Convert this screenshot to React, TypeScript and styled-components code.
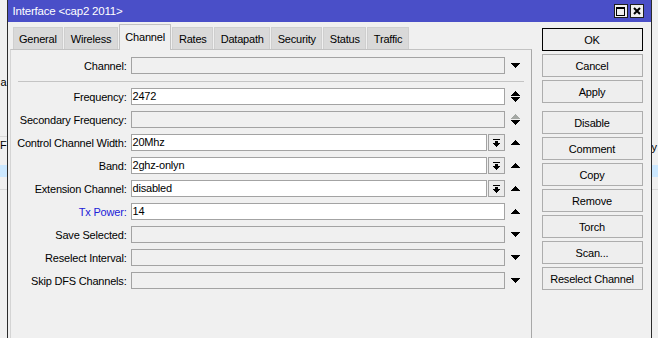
import React from "react";
import styled, { createGlobalStyle } from "styled-components";

type ArrowKind = "down" | "up" | "updown" | "updown-off";

interface FieldRow {
  label: string;
  value?: string;
  editable?: boolean;
  drop?: boolean;
  accent?: boolean;
  arrow: ArrowKind;
}

const rows: FieldRow[] = [
  { label: "Frequency", value: "2472", editable: true, arrow: "updown" },
  { label: "Secondary Frequency", arrow: "updown-off" },
  { label: "Control Channel Width", value: "20Mhz", editable: true, drop: true, arrow: "up" },
  { label: "Band", value: "2ghz-onlyn", editable: true, drop: true, arrow: "up" },
  { label: "Extension Channel", value: "disabled", editable: true, drop: true, arrow: "up" },
  { label: "Tx Power", value: "14", editable: true, accent: true, arrow: "up" },
  { label: "Save Selected", arrow: "down" },
  { label: "Reselect Interval", arrow: "down" },
  { label: "Skip DFS Channels", arrow: "down" },
];

const tabs = ["General", "Wireless", "Channel", "Rates", "Datapath", "Security", "Status", "Traffic"];

const buttons = [
  { text: "OK", primary: true },
  { text: "Cancel" },
  { text: "Apply" },
  { text: "Disable", groupStart: true },
  { text: "Comment" },
  { text: "Copy" },
  { text: "Remove" },
  { text: "Torch" },
  { text: "Scan..." },
  { text: "Reselect Channel" },
];

const GlobalStyle = createGlobalStyle`
  html, body { margin: 0; padding: 0; background: #f0f0f0; }
  body {
    font-family: "Liberation Sans", Arial, sans-serif;
    font-size: 11px;
    color: #000;
  }
  * { box-sizing: border-box; }
`;

const Desktop = styled.div`
  display: flex;
  width: 658px;
  height: 338px;
  overflow: hidden;
  background: #f0f0f0;
  letter-spacing: -0.2px;
`;

const Peek = styled.div<{ $align: "left" | "right" }>`
  flex: 1;
  min-width: 0;
  display: flex;
  flex-direction: column;
  overflow: hidden;
  white-space: nowrap;
  text-align: ${(p) => p.$align};
`;

const PeekRow = styled.div<{ $h: number; $selected?: boolean; $line?: boolean }>`
  flex: none;
  height: ${(p) => p.$h}px;
  line-height: ${(p) => p.$h}px;
  background: ${(p) => (p.$selected ? "#cce8ff" : "transparent")};
  border-bottom: ${(p) => (p.$line ? "1px solid #d9d9d9" : "none")};
`;

const Window = styled.div`
  flex: none;
  width: 645px;
  display: flex;
  flex-direction: column;
  background: #f0f0f0;
  border-left: 1px solid #2b2b2b;
  border-right: 1px solid #2b2b2b;
`;

const TitleBar = styled.div`
  flex: none;
  height: 22px;
  display: flex;
  align-items: center;
  padding: 0 7px 0 5px;
  background: #4a4fc8;
  color: #fff;
  font-size: 11.5px;
`;

const Title = styled.span`
  flex: 1;
`;

const TitleButton = styled.div`
  width: 14px;
  height: 14px;
  margin-left: 2px;
  display: flex;
  align-items: center;
  justify-content: center;
  background: #efefef;
  border: 1px solid #1e1e1e;
`;

const Body = styled.div`
  flex: 1;
  display: flex;
  gap: 10px;
  padding: 0 8px 0 2px;
`;

const Main = styled.div`
  width: 522px;
  display: flex;
  flex-direction: column;
  padding-top: 2px;
`;

const TabStrip = styled.div`
  flex: none;
  height: 25px;
  display: flex;
  align-items: flex-end;
  gap: 1px;
  padding-left: 3px;
`;

const Tab = styled.div<{ $active?: boolean }>`
  position: relative;
  z-index: ${(p) => (p.$active ? 1 : 0)};
  height: ${(p) => (p.$active ? 26 : 22)}px;
  margin-bottom: ${(p) => (p.$active ? -1 : 0)}px;
  padding: 0 5.5px ${(p) => (p.$active ? 2 : 0)}px;
  display: flex;
  align-items: center;
  background: ${(p) => (p.$active ? "#f0f0f0" : "#d9d9d9")};
  border: 1px solid ${(p) => (p.$active ? "#c2c2c2" : "#cfcfcf")};
  border-bottom: none;
`;

const Panel = styled.div`
  flex: 1;
  display: flex;
  flex-direction: column;
  gap: 6px;
  padding: 7px 7px 0 0;
  border-top: 1px solid #c2c2c2;
  border-left: 1px solid #d4d4d4;
  border-right: 1px solid #a8a8a8;
`;

const Separator = styled.div`
  flex: none;
  height: 1px;
  margin: 1px 0 0 7px;
  background: #c4c4c4;
`;

const Row = styled.div`
  flex: none;
  height: 17px;
  display: grid;
  grid-template-columns: 120px 374px 19px;
  align-items: center;
`;

const Label = styled.span<{ $accent?: boolean }>`
  padding-right: 4px;
  text-align: right;
  white-space: nowrap;
  color: ${(p) => (p.$accent ? "#2020d8" : "#000")};
`;

const FieldWrap = styled.div`
  display: flex;
  gap: 1px;
  height: 17px;
`;

const Field = styled.div<{ $editable?: boolean }>`
  flex: 1;
  height: 17px;
  padding-left: 1px;
  line-height: 15px;
  border: 1px solid #a3a3a3;
  background: ${(p) => (p.$editable ? "#fff" : "#f0f0f0")};
  white-space: nowrap;
  overflow: hidden;
`;

const DropButton = styled.div`
  flex: none;
  width: 17px;
  height: 17px;
  display: flex;
  align-items: center;
  justify-content: center;
  border: 1px solid #a3a3a3;
  background: #ececec;
`;

const ArrowCell = styled.div`
  height: 17px;
  display: flex;
  align-items: center;
  padding-left: 6px;
`;

const ButtonColumn = styled.div`
  width: 101px;
  display: flex;
  flex-direction: column;
  gap: 3px;
  padding-top: 6px;
`;

const Button = styled.button<{ $primary?: boolean; $groupStart?: boolean }>`
  flex: none;
  height: 23px;
  margin-top: ${(p) => (p.$groupStart ? 5 : 0)}px;
  padding: 0;
  font: inherit;
  letter-spacing: inherit;
  color: #000;
  background: #eeeeee;
  border: 1px solid ${(p) => (p.$primary ? "#000" : "#adadad")};
`;

// pixel triangles, 9px wide, 5px tall
const TriDown = ({ y = 0, fill = "#000" }: { y?: number; fill?: string }) => (
  <path d={`M0 ${y}h9v1h-1v1h-1v1h-1v1h-1v1h-1v-1h-1v-1h-1v-1h-1v-1h-1z`} fill={fill} />
);
const TriUp = ({ y = 0, fill = "#000" }: { y?: number; fill?: string }) => (
  <path d={`M4 ${y}h1v1h1v1h1v1h1v1h1v1h-9v-1h1v-1h1v-1h1v-1h1z`} fill={fill} />
);

const Arrow = ({ kind }: { kind: ArrowKind }) => {
  if (kind === "down" || kind === "up") {
    return (
      <svg width="9" height="5" viewBox="0 0 9 5" shapeRendering="crispEdges">
        {kind === "down" ? <TriDown /> : <TriUp />}
      </svg>
    );
  }
  return (
    <svg width="9" height="11" viewBox="0 0 9 11" shapeRendering="crispEdges">
      <TriUp fill={kind === "updown-off" ? "#a4a8a4" : "#000"} />
      <TriDown y={6} />
    </svg>
  );
};

const DropIcon = () => (
  <svg width="7" height="8" viewBox="0 0 7 8" shapeRendering="crispEdges">
    <path d="M0 0h7v1h-7z M2 2h3v2h2v1h-1v1h-1v1h-1v1h-1v-1h-1v-1h-1v-1h-1v-1h2z" fill="#000" />
  </svg>
);

export default function App() {
  return (
    <>
      <GlobalStyle />
      <Desktop>
        <Peek $align="right">
          <PeekRow $h={74} />
          <PeekRow $h={17}>a</PeekRow>
          <PeekRow $h={46} $line />
          <PeekRow $h={17}>F</PeekRow>
          <PeekRow $h={11} />
          <PeekRow $h={12} $selected />
          <PeekRow $h={13} $line />
        </Peek>

        <Window>
          <TitleBar>
            <Title>Interface &lt;cap2 2011&gt;</Title>
            <TitleButton>
              <svg width="9" height="9" viewBox="0 0 9 9" shapeRendering="crispEdges">
                <path d="M0 0h9v9h-9z M1 2v6h7v-6z" fill="#000" fillRule="evenodd" />
              </svg>
            </TitleButton>
            <TitleButton>
              <svg width="8" height="8" viewBox="0 0 8 8">
                <path d="M1 1L7 7M7 1L1 7" stroke="#000" strokeWidth="2" />
              </svg>
            </TitleButton>
          </TitleBar>

          <Body>
            <Main>
              <TabStrip>
                {tabs.map((t) => (
                  <Tab key={t} $active={t === "Channel"}>
                    {t}
                  </Tab>
                ))}
              </TabStrip>
              <Panel>
                <Row>
                  <Label>Channel:</Label>
                  <Field />
                  <ArrowCell>
                    <Arrow kind="down" />
                  </ArrowCell>
                </Row>
                <Separator />
                {rows.map((r) => (
                  <Row key={r.label}>
                    <Label $accent={r.accent}>{r.label}:</Label>
                    <FieldWrap>
                      <Field $editable={r.editable}>{r.value}</Field>
                      {r.drop && (
                        <DropButton>
                          <DropIcon />
                        </DropButton>
                      )}
                    </FieldWrap>
                    <ArrowCell>
                      <Arrow kind={r.arrow} />
                    </ArrowCell>
                  </Row>
                ))}
              </Panel>
            </Main>

            <ButtonColumn>
              {buttons.map((b) => (
                <Button key={b.text} $primary={b.primary} $groupStart={b.groupStart}>
                  {b.text}
                </Button>
              ))}
            </ButtonColumn>
          </Body>
        </Window>

        <Peek $align="left">
          <PeekRow $h={140} />
          <PeekRow $h={14}>y</PeekRow>
          <PeekRow $h={11} />
          <PeekRow $h={12} $selected />
          <PeekRow $h={13} $line />
        </Peek>
      </Desktop>
    </>
  );
}
